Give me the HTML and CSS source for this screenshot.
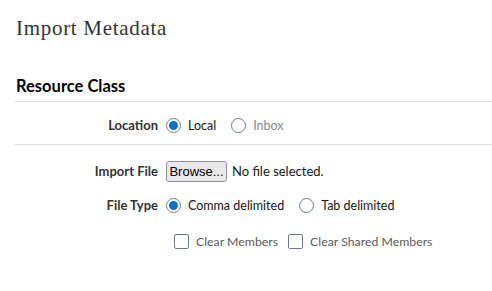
FILE: index.html
```html
<!DOCTYPE html>
<html lang="en">
<head>
  <meta charset="UTF-8" />
  <title>Import Metadata</title>
  <link rel="stylesheet" href="styles.css">
</head>
<body>

<h1 class="page-title">Import Metadata</h1>

<section class="panel">
  <h2 class="panel-title">Resource Class</h2>

  <div class="row row-sep">
    <span class="label">Location</span>
    <div class="controls">
      <label class="radio"><span class="dot checked"></span>Local</label>
      <label class="radio disabled"><span class="dot"></span>Inbox</label>
    </div>
  </div>

  <div class="row row-file">
    <span class="label">Import File</span>
    <div class="controls">
      <button class="browse">Browse...</button>
      <span class="file-name">No file selected.</span>
    </div>
  </div>

  <div class="row row-type">
    <span class="label">File Type</span>
    <div class="controls">
      <label class="radio wide"><span class="dot checked"></span>Comma delimited</label>
      <label class="radio"><span class="dot"></span>Tab delimited</label>
    </div>
  </div>

  <div class="checks">
    <label class="check"><span class="box"></span>Clear Members</label>
    <label class="check"><span class="box"></span>Clear Shared Members</label>
  </div>
</section>

</body>
</html>
```

FILE: styles.css
```css
:root {
  --text: #161513;
  --muted: #8a8987;
  --line: #d6dfe6;
  --ring: #6f7a90;
  --accent: #0572ce;
}

* {
  margin: 0;
  padding: 0;
  box-sizing: border-box;
}

body {
  background: #fff;
  color: var(--text);
  font-family: Lato, 'Noto Sans', sans-serif;
  font-size: 12.5px;
  padding: 0 0 0 15px;
}

.page-title {
  font-family: 'Liberation Serif', serif;
  font-weight: normal;
  font-size: 21px;
  letter-spacing: 0.7px;
  color: #333;
  padding: 16px 0 0 1px;
  line-height: 24px;
  height: 76px;
}

.panel-title {
  font-size: 16.5px;
  font-weight: bold;
  color: #000;
  padding-left: 1px;
  line-height: 20px;
  height: 26px;
  border-bottom: 1px solid var(--line);
}

.row {
  display: grid;
  grid-template-columns: 143px auto;
  column-gap: 8px;
  align-items: center;
}

.row-sep {
  height: 43px;
  padding-top: 4px;
  border-bottom: 1px solid var(--line);
}

.row-file {
  margin-top: 15px;
  height: 22px;
}

.row-type {
  margin-top: 12px;
  height: 22px;
}

.label {
  text-align: right;
  font-weight: bold;
  font-size: 13px;
  color: #333;
}

.controls {
  display: flex;
  align-items: center;
}

.radio {
  display: flex;
  align-items: center;
  gap: 7px;
  margin-right: 15px;
}

.radio.wide {
  margin-right: 15px;
}

.radio.disabled {
  color: var(--muted);
}

.dot {
  width: 15px;
  height: 15px;
  border: 1px solid var(--ring);
  border-radius: 50%;
  display: flex;
  align-items: center;
  justify-content: center;
}

.dot.checked::after {
  content: '';
  width: 9px;
  height: 9px;
  border-radius: 50%;
  background: var(--accent);
}

.browse {
  font-family: 'Liberation Sans', Arial, sans-serif;
  font-size: 13px;
  color: #000;
  height: 21px;
  width: 61px;
  background: #e9e9ed;
  border: 1px solid #8f8f9d;
  border-radius: 3px;
  margin-right: 5px;
}

.file-name {
  font-size: 13px;
}

.checks {
  display: flex;
  margin: 18px 0 0 159px;
  font-size: 12.3px;
  color: #5b5a58;
}

.check {
  display: flex;
  align-items: center;
  gap: 7px;
  margin-right: 10px;
}

.box {
  width: 15px;
  height: 15px;
  border: 1px solid var(--ring);
  border-radius: 2px;
}
```
